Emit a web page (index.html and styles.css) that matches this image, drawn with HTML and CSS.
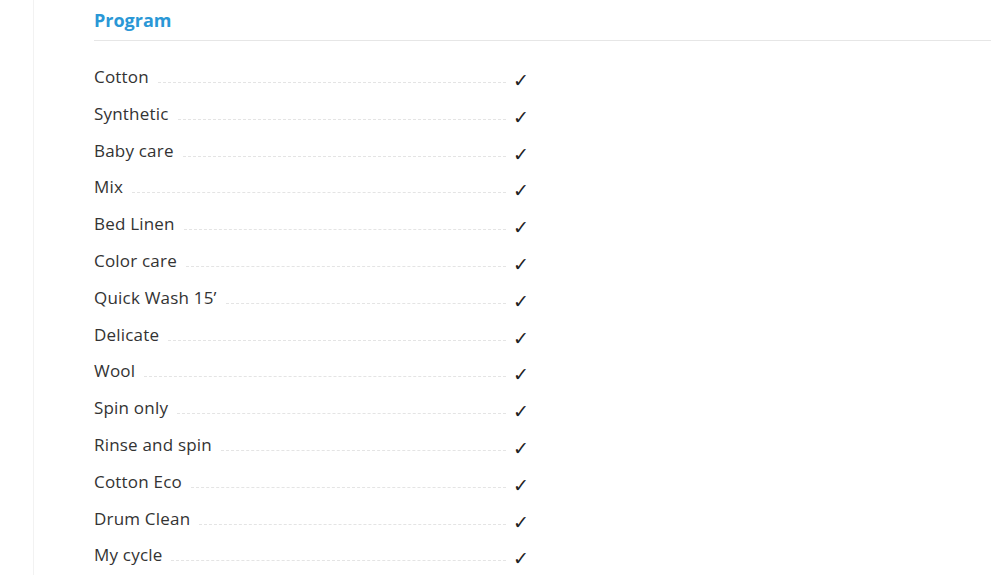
FILE: index.html
```html
<!DOCTYPE html>
<html>
<head>
<meta charset="utf-8">
<link rel="stylesheet" href="styles.css">
</head>
<body>
<div class="page">
  <aside class="side"></aside>
  <main class="main">
    <h2 class="title">Program</h2>
    <ul class="specs">
      <li class="row"><span class="label">Cotton</span><span class="dots"></span><span class="check">✓</span></li>
      <li class="row"><span class="label">Synthetic</span><span class="dots"></span><span class="check">✓</span></li>
      <li class="row"><span class="label">Baby care</span><span class="dots"></span><span class="check">✓</span></li>
      <li class="row"><span class="label">Mix</span><span class="dots"></span><span class="check">✓</span></li>
      <li class="row"><span class="label">Bed Linen</span><span class="dots"></span><span class="check">✓</span></li>
      <li class="row"><span class="label">Color care</span><span class="dots"></span><span class="check">✓</span></li>
      <li class="row"><span class="label">Quick Wash 15’</span><span class="dots"></span><span class="check">✓</span></li>
      <li class="row"><span class="label">Delicate</span><span class="dots"></span><span class="check">✓</span></li>
      <li class="row"><span class="label">Wool</span><span class="dots"></span><span class="check">✓</span></li>
      <li class="row"><span class="label">Spin only</span><span class="dots"></span><span class="check">✓</span></li>
      <li class="row"><span class="label">Rinse and spin</span><span class="dots"></span><span class="check">✓</span></li>
      <li class="row"><span class="label">Cotton Eco</span><span class="dots"></span><span class="check">✓</span></li>
      <li class="row"><span class="label">Drum Clean</span><span class="dots"></span><span class="check">✓</span></li>
      <li class="row"><span class="label">My cycle</span><span class="dots"></span><span class="check">✓</span></li>
    </ul>
  </main>
</div>
</body>
</html>
```

FILE: styles.css
```css
html, body {
  margin: 0;
  padding: 0;
  background: #fff;
}
body {
  font-family: "Open Sans", "Liberation Sans", sans-serif;
  color: #333;
  overflow: hidden;
}
.page {
  display: flex;
  min-height: 575px;
}
.side {
  width: 33px;
  flex: none;
  border-right: 1px solid #f2f2f2;
}
.main {
  flex: 1;
  padding-left: 60px;
}
.title {
  margin: 0;
  padding-top: 8px;
  height: 32px;
  font-size: 18px;
  font-weight: 700;
  line-height: 25px;
  color: #2a97d6;
  border-bottom: 1px solid #e6e6e6;
}
.specs {
  list-style: none;
  margin: 0;
  padding: 17px 0 0 0;
  width: 434px;
}
.row {
  display: flex;
  align-items: baseline;
  height: 36.8px;
  line-height: 36px;
  font-size: 17px;
  letter-spacing: 0.2px;
}
.label {
  flex: none;
  color: #333;
}
.dots {
  flex: 1;
  margin: 0 7px 0 9px;
  border-bottom: 1px dashed #e4e4e4;
}
.check {
  flex: none;
  width: 15px;
  font-size: 19px;
  font-weight: 700;
  color: #222;
  font-family: "DejaVu Sans", sans-serif;
  position: relative;
  top: 4px;
}
```
